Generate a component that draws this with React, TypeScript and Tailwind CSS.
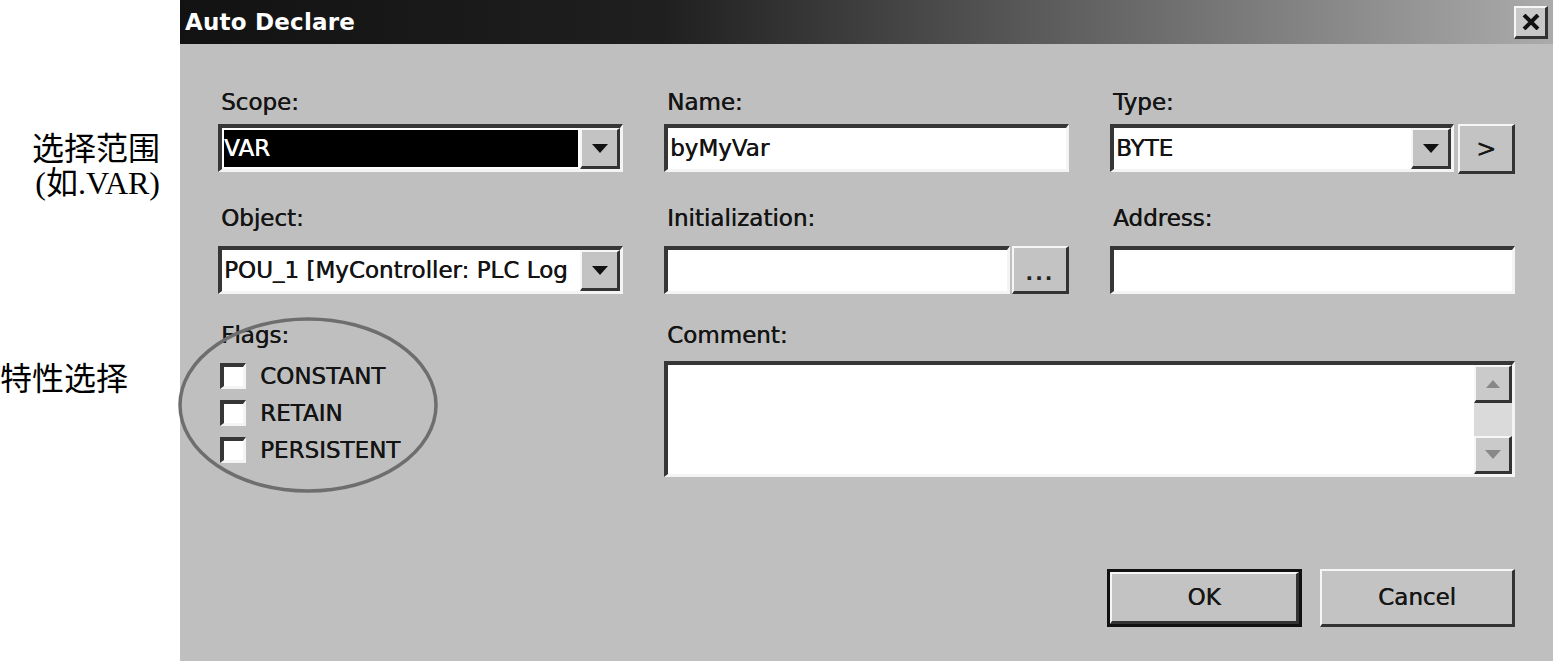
import React from "react";

const FONT = { fontFamily: '"DejaVu Sans", "Liberation Sans", sans-serif' };
const THICK = " [text-shadow:0.45px_0_0_currentColor]";

function Sunken({ className = "", children }: { className?: string; children?: React.ReactNode }) {
  return (
    <div
      className={
        "border-t-[4px] border-l-[4px] border-r-[3px] border-b-[3px] border-t-[#363636] border-l-[#363636] border-r-[#f4f4f4] border-b-[#f4f4f4] bg-white " +
        className
      }
    >
      {children}
    </div>
  );
}

function Raised({ className = "", children }: { className?: string; children?: React.ReactNode }) {
  return (
    <div
      className={
        "flex items-center justify-center border-t-[2px] border-l-[2px] border-r-[3px] border-b-[3px] border-t-[#f6f6f6] border-l-[#f6f6f6] border-r-[#333] border-b-[#333] bg-[#c3c3c3] " +
        className
      }
    >
      {children}
    </div>
  );
}

function DownTri({ color = "#111" }: { color?: string }) {
  return (
    <svg width="16" height="9" viewBox="0 0 16 9">
      <path d="M0 0 L16 0 L8 9 Z" fill={color} />
    </svg>
  );
}

function UpTri({ color = "#888" }: { color?: string }) {
  return (
    <svg width="14" height="9" viewBox="0 0 14 9">
      <path d="M0 9 L14 9 L7 1 Z" fill={color} />
    </svg>
  );
}

function Combo({ text, selected }: { text: string; selected?: boolean }) {
  return (
    <Sunken className="h-[48px] flex">
      <div className="flex-1 min-w-0 p-[2px] overflow-hidden">
        <div
          className={
            "h-full flex items-center whitespace-nowrap overflow-hidden text-[23px]" +
            THICK +
            (selected ? " bg-black text-white" : " text-[#141414]")
          }
        >
          {text}
        </div>
      </div>
      <Raised className="w-[40px] h-full shrink-0">
        <DownTri />
      </Raised>
    </Sunken>
  );
}

function Label({ children, className = "" }: { children: React.ReactNode; className?: string }) {
  return (
    <div className={"text-[23px] leading-[28px] text-[#141414] pl-[3px]" + THICK + " " + className}>{children}</div>
  );
}

function Check({ label }: { label: string }) {
  return (
    <div className="flex items-center gap-[14px] h-[26px]">
      <Sunken className="w-[26px] h-[26px] shrink-0" />
      <span className={"text-[23px] leading-[28px] text-[#141414]" + THICK}>{label}</span>
    </div>
  );
}

export default function App() {
  return (
    <div className="w-[1553px] h-[661px] flex bg-white overflow-hidden" style={FONT}>
      {/* annotations */}
      <div
        className="w-[180px] shrink-0 flex flex-col text-[32px] leading-[34px] text-black"
        style={{ fontFamily: '"Liberation Serif", "Noto Sans CJK SC", serif' }}
      >
        <div className="pt-[132px] pr-[20px] text-right">
          <div>选择范围</div>
          <div>(如.VAR)</div>
        </div>
        <div className="mt-[162px]">特性选择</div>
      </div>

      {/* dialog */}
      <div className="flex-1 flex flex-col bg-[#bfbfbf]">
        <div className="h-[44px] shrink-0 flex items-center justify-between bg-[linear-gradient(to_right,#121212_0%,#1f1f1f_35%,#ababab_100%)]">
          <span className="pl-[5px] text-[23px] font-bold text-white tracking-[0.2px]">Auto Declare</span>
          <Raised className="w-[34px] h-[33px] mr-[5px] bg-[#c8c8c8]">
            <svg width="18" height="16" viewBox="0 0 18 16">
              <path d="M2 1 L16 15 M16 1 L2 15" stroke="#111" strokeWidth="4" />
            </svg>
          </Raised>
        </div>

        <div className="flex-1 px-[38px] pt-[44px]">
          <div className="grid grid-cols-3 gap-x-[41px]">
            {/* row 1 */}
            <div>
              <Label className="mb-[8px]">Scope:</Label>
              <Combo text="VAR" selected />
            </div>
            <div>
              <Label className="mb-[8px]">Name:</Label>
              <Sunken className="h-[48px] flex items-center pl-[2px]">
                <span className={"text-[23px] text-[#141414]" + THICK}>byMyVar</span>
              </Sunken>
            </div>
            <div>
              <Label className="mb-[8px]">Type:</Label>
              <div className="flex gap-[4px]">
                <div className="flex-1">
                  <Combo text="BYTE" />
                </div>
                <Raised className={"w-[57px] h-[50px] shrink-0 text-[24px] text-[#161616]" + THICK}>&gt;</Raised>
              </div>
            </div>

            {/* row 2 */}
            <div className="mt-[30px]">
              <Label className="mb-[14px]">Object:</Label>
              <Combo text="POU_1 [MyController: PLC Log" />
            </div>
            <div className="mt-[30px]">
              <Label className="mb-[14px]">Initialization:</Label>
              <div className="flex gap-[2px]">
                <Sunken className="flex-1 h-[48px]" />
                <Raised className="w-[57px] h-[48px] shrink-0 text-[20px] text-[#222] font-bold tracking-[2px]">
                  <span className="mt-[6px]">...</span>
                </Raised>
              </div>
            </div>
            <div className="mt-[30px]">
              <Label className="mb-[14px]">Address:</Label>
              <Sunken className="h-[48px]" />
            </div>

            {/* row 3 */}
            <div className="mt-[27px] relative">
              <Label className="mb-[14px]">Flags:</Label>
              <div className="flex flex-col gap-[11px] pl-[2px]">
                <Check label="CONSTANT" />
                <Check label="RETAIN" />
                <Check label="PERSISTENT" />
              </div>
              <svg
                className="absolute left-[-41px] top-[-5px] pointer-events-none"
                width="262"
                height="178"
                viewBox="0 0 262 178"
              >
                <ellipse cx="131" cy="89" rx="128" ry="86" fill="none" stroke="#6e6e6e" strokeWidth="3.5" />
              </svg>
            </div>
            <div className="mt-[27px] col-span-2">
              <Label className="mb-[12px]">Comment:</Label>
              <Sunken className="h-[116px] flex justify-end">
                <div className="w-[38px] h-full flex flex-col bg-[#dadada]">
                  <Raised className="h-[38px] shrink-0 bg-[#cacaca]">
                    <UpTri />
                  </Raised>
                  <div className="flex-1" />
                  <Raised className="h-[38px] shrink-0 bg-[#cacaca]">
                    <DownTri color="#888" />
                  </Raised>
                </div>
              </Sunken>
            </div>
          </div>

          {/* buttons */}
          <div className="flex justify-end gap-[18px] mt-[92px]">
            <div className="w-[195px] h-[58px] border-[3px] border-[#111]">
              <Raised className={"w-full h-full border-t-[#eee] border-l-[#eee] text-[23px] text-[#161616]" + THICK}>
                OK
              </Raised>
            </div>
            <Raised className={"w-[195px] h-[58px] text-[23px] text-[#161616]" + THICK}>Cancel</Raised>
          </div>
        </div>
      </div>
    </div>
  );
}
